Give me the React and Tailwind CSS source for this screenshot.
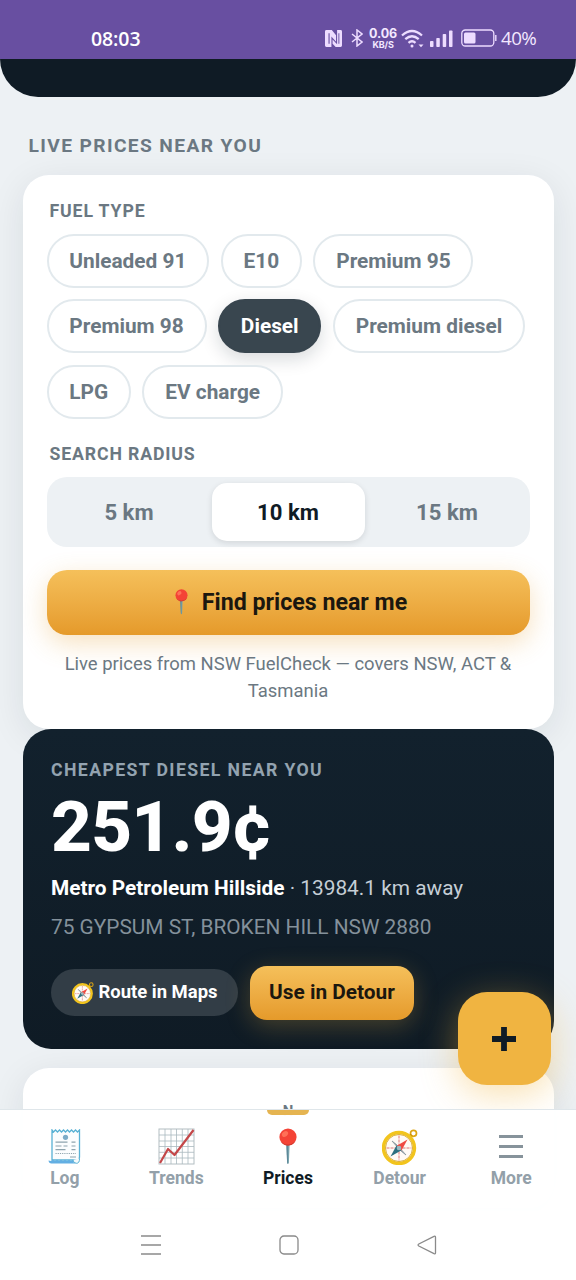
import { useState } from "react";

const fuelTypes = ["Unleaded 91", "E10", "Premium 95", "Premium 98", "Diesel", "Premium diesel", "LPG", "EV charge"];
const radiusOptions = ["5 km", "10 km", "15 km"];

function PinIcon({ className }) {
  return (
    <svg viewBox="0 0 18 37" className={className}>
      <path d="M7.4 16h3.2l-.7 18.5q-.9 3-1.8 0z" fill="#78a3ad" />
      <path d="M7.4 16h1.3v20q-.4 0-.6-1.500z" fill="#527f91" />
      <circle cx="9" cy="9" r="8.6" fill="#f44336" />
      <path d="M1.500 13a8.600 8.600 0 0 0 15.400-.700A9.500 9.500 0 0 1 1.500 13" fill="#c6372d" />
      <ellipse cx="6" cy="6" rx="3.400" ry="2.500" fill="#ff7057" transform="rotate(-40 6 6)" />
    </svg>
  );
}

function CompassIcon({ className }) {
  return (
    <svg viewBox="0 0 36 36" className={className}>
      <circle cx="31.500" cy="4.300" r="3" fill="none" stroke="#dda512" strokeWidth="1.700" />
      <path d="m26 9 3.500-3" stroke="#c78c0b" strokeWidth="3" />
      <circle cx="17" cy="19" r="15.500" fill="#fffaf5" stroke="#f2c41d" strokeWidth="3.400" />
      <circle cx="17" cy="19" r="13.500" fill="none" stroke="#d19d14" strokeWidth=".8" />
      <path d="M17 6.500v25M4.500 19h25" stroke="#de7777" strokeWidth="1" strokeDasharray="3 1" />
      <path d="m10 12 5.500 4.500L24 26l-5.500-4.500z" fill="#8f9ca3" stroke="#8f9ca3" />
      <path d="m25.500 10.500-10.700 6.300 4.700 4.600z" fill="#ef4a42" />
      <path d="m8.500 27.500 6-10.900 4.700 4.800z" fill="#2d7080" />
      <circle cx="17" cy="19" r="2.300" fill="#9bb8bf" />
    </svg>
  );
}

function ReceiptIcon() {
  return (
    <svg viewBox="0 0 33 35" className="h-[35px] w-[33px]">
      <path d="M4 1v30h25q2.500 0 2.500-3V1l-2 2-2-2-2 2-2-2-2 2-2-2-2 2-2-2-2 2-2-2-2 2-2-2-2 2z" fill="#fbfdfe" stroke="#58b1d4" strokeWidth="1.300" />
      <path d="M.5 31.500 3 32l2-1.300L7 32l2-1.300L11 32l2-1.300L15 32l2-1.300L19 32l2-1.300L23 32l2-1.300q0 3.500 3.500 3.800H3.500Q.8 34.500.5 31.500" fill="#63afe3" />
      <path d="M25 31q.3 3.300 3.500 3.300t3-5" fill="#f5fafc" stroke="#58b1d4" strokeWidth="1" />
      <circle cx="17.500" cy="8.300" r="2.600" fill="#7cacc8" />
      <path d="M7.500 13.200h12m4 0h4M7.500 17h6m2 0h4m4 0h4M7.500 20.700h10m6 0h4M22 28h6" stroke="#8ea4ae" strokeWidth="1.200" />
      <path d="M7.500 24.500h20.500" stroke="#8ea4ae" strokeWidth="1.200" strokeDasharray="1.200 1" />
    </svg>
  );
}

function ChartIcon() {
  return (
    <svg viewBox="0 0 37 37" className="h-[37px] w-[37px]">
      <rect x="1" y="1" width="35" height="35" fill="#fff" stroke="#b3bec2" />
      <path d="M7 1v35M13 1v35M18.500 1v35M24.300 1v35M30 1v35M1 7h35M1 13h35M1 18.500h35M1 24.300h35M1 30h35" stroke="#a9b9bf" strokeWidth=".8" />
      <path d="m2 35 8-14 6.500 6L35.500 2" fill="none" stroke="#c44749" strokeWidth="2.200" strokeLinejoin="round" />
    </svg>
  );
}

function MenuIcon() {
  return (
    <svg viewBox="0 0 24 24" className="size-6">
      <path d="M0 1.500h24M0 11.500h24M0 21.500h24" stroke="#87939b" strokeWidth="2.800" />
    </svg>
  );
}

function StatusBar() {
  return (
    <header className="flex h-[59px] shrink-0 items-end bg-[#684fa1] pr-[40px] pb-[8px] pl-[91px] font-['Open_Sans',sans-serif] text-[#f3e8ff]">
      <span className="mr-auto pb-px text-[19.500px] font-semibold leading-[23px] tracking-[-0.1px] text-white">08:03</span>
      <svg viewBox="0 0 18 18" className="mr-px mb-[4px] h-[17px] w-[17px]" fill="#eddcff">
        <path d="M1.500 0h5.700l4.500 5.500v7L6.800 7v11H1.500Q0 18 0 16.500v-15Q0 0 1.500 0m2.200 3.500v11h1.200v-11z" fillRule="evenodd" />
        <path d="M16.500 18h-5.200L8 14.500V10l4.800 5V0h3.700Q18 0 18 1.500v15q0 1.500-1.500 1.500m-2.300-3.500v-11h1v11z" fillRule="evenodd" />
      </svg>
      <svg viewBox="0 0 12 18" className="mr-px mb-[4px] ml-[8px] h-[18px] w-3" fill="none" stroke="#eddcff" strokeWidth="1.500">
        <path d="m1 5 10 8-5 4V1l5 4-10 8" />
      </svg>
      <div className="mb-[2px] ml-[5px] flex w-[28px] flex-col items-center font-['Inter',sans-serif] font-bold whitespace-nowrap">
        <span className="text-[12.500px] leading-[12px] tracking-[-0.1px]">0.06</span>
        <span className="text-[9px] leading-[9px] tracking-[-0.2px]">KB/S</span>
      </div>
      <svg viewBox="0 0 24 19" className="mb-[3px] ml-[4px] h-[19px] w-6" fill="none" stroke="#eddcff" strokeWidth="2.300">
        <path d="M1 6.500q10-9 20 0M4.300 10.200q6.700-6 13.400 0M7.500 13.800q3.500-3 7 0" />
        <circle cx="11" cy="17" r="1.500" fill="#eddcff" stroke="none" />
        <path d="M17.500 15.500h5L20 18.200z" fill="#eddcff" stroke="none" />
      </svg>
      <svg viewBox="0 0 23 17" className="mb-[4px] ml-[5px] h-[17px] w-[23px]" fill="#eddcff">
        <rect y="11" width="3.500" height="6" rx=".8" />
        <rect x="6.300" y="8" width="3.500" height="9" rx=".8" />
        <rect x="12.700" y="4" width="3.500" height="13" rx=".8" />
        <rect x="19" y=".5" width="3.500" height="16.500" rx=".8" />
      </svg>
      <svg viewBox="0 0 36 18" className="mb-[4px] ml-2 h-[18px] w-9">
        <rect x=".8" y="1" width="32" height="16" rx="3.500" fill="none" stroke="#eddcff" strokeWidth="1.300" />
        <rect x="3" y="3.500" width="11.500" height="11" rx="1.500" fill="#eddcff" />
        <path d="M34.800 6v6" stroke="#eddcff" strokeWidth="1.400" />
      </svg>
      <span className="ml-1 pb-px text-[18.800px] font-medium leading-[23px] tracking-[-0.7px]">40%</span>
    </header>
  );
}

const navItems = [
  { label: "Log", icon: <ReceiptIcon /> },
  { label: "Trends", icon: <ChartIcon /> },
  { label: "Prices", icon: <PinIcon className="h-[37px] w-[18px]" /> },
  { label: "Detour", icon: <CompassIcon className="size-[36px]" /> },
  { label: "More", icon: <MenuIcon /> },
];

export default function App() {
  const [fuel, setFuel] = useState("Diesel");
  const [radius, setRadius] = useState("10 km");

  return (
    <div className="relative flex h-[1280px] w-[576px] flex-col overflow-hidden bg-[#edf1f4] font-['Roboto',sans-serif] text-[#6b7882]">
      <StatusBar />
      <div className="h-[38px] shrink-0 rounded-b-[40px] bg-[#0f1b25]" />

      <main className="flex min-h-0 flex-1 flex-col px-[22.5px]">
        <h2 className="mt-[37px] mb-[16.8px] pl-[6px] text-[19.2px] leading-6 font-bold tracking-[1.38px]">LIVE PRICES NEAR YOU</h2>

        {/* Search card */}
        <section className="h-[553.8px] shrink-0 rounded-[26px] bg-white px-6 pt-[25px] shadow-[0_8px_36px_rgba(15,35,48,0.09)]">
          <h3 className="pl-[3px] text-[17.700px] leading-[22px] font-bold tracking-[0.86px]">FUEL TYPE</h3>
          <div className="mt-3 flex flex-wrap gap-[11.5px]">
            {fuelTypes.map((type) => (
              <button
                key={type}
                onClick={() => setFuel(type)}
                className={`h-[54px] rounded-full border-2 px-[20.8px] pt-[1.5px] text-[20.830px] font-bold ${
                  fuel === type
                    ? "border-[#39464f] bg-[#39464f] text-white shadow-[0_6px_18px_rgba(15,27,37,0.16)]"
                    : "border-[#e2e9ed] bg-white"
                }`}
              >
                {type}
              </button>
            ))}
          </div>

          <h3 className="mt-6 pl-[3px] text-[17.700px] leading-[22px] font-bold tracking-[0.86px]">SEARCH RADIUS</h3>
          <div className="mt-[12.5px] flex h-[69.5px] gap-[6px] rounded-[20px] bg-[#edf1f4] p-[6px]">
            {radiusOptions.map((option) => (
              <button
                key={option}
                onClick={() => setRadius(option)}
                className={`flex-1 rounded-[15px] pt-px text-[22.100px] font-bold ${
                  radius === option ? "bg-white text-[#0f1b25] shadow-[0_2px_6px_rgba(15,27,37,0.12)]" : ""
                }`}
              >
                {option}
              </button>
            ))}
          </div>

          <button className="mt-[23px] flex h-[65px] w-full items-center justify-center rounded-[20px] bg-linear-to-b from-[#f5c05a] to-[#e59a2a] pt-px pl-[6px] text-[23.200px] font-bold text-[#1b170f] shadow-[0_8px_26px_rgba(229,154,42,0.30)]">
            <PinIcon className="mr-[14px] mb-px h-[26px] w-[13px]" />
            Find prices near me
          </button>
          <p className="mt-4 text-center text-[18.450px] leading-[26.900px]">
            Live prices from NSW FuelCheck — covers NSW, ACT &amp; Tasmania
          </p>
        </section>

        {/* Cheapest result */}
        <section className="h-[320px] shrink-0 rounded-[28px] bg-linear-to-b from-[#12212d] to-[#0f1b25] px-[28.5px] pt-[30px]">
          <h3 className="text-[17.700px] leading-[22px] font-bold tracking-[1.38px] text-[#93a3b0]">CHEAPEST DIESEL NEAR YOU</h3>
          <div className="mt-[9px] text-[71px] leading-[74px] font-extrabold tracking-[-0.8px] text-white">251.9¢</div>
          <p className="mt-[9px] text-[20.830px] leading-[30px] text-[#c5ced6]">
            <b className="font-bold text-white">Metro Petroleum Hillside</b> · 13984.1 km away
          </p>
          <p className="mt-[9px] text-[20.830px] leading-[30px] text-[#84919b]">75 GYPSUM ST, BROKEN HILL NSW 2880</p>
          <div className="mt-6 flex items-center gap-3">
            <button className="flex h-[47px] w-[187px] items-center justify-center rounded-full bg-[#323d46] text-[18.450px] font-bold text-white">
              <CompassIcon className="mr-[5px] size-[22px]" />
              Route in Maps
            </button>
            <button className="h-[54px] w-[164px] rounded-[17px] bg-linear-to-b from-[#f5c05a] to-[#e59a2a] pt-px text-[20.830px] font-bold text-[#1b170f] shadow-[0_6px_24px_rgba(240,180,62,0.25)]">
              Use in Detour
            </button>
          </div>
        </section>

        {/* Map card, cut off by the tab bar */}
        <section className="mt-[19.5px] h-[140px] shrink-0 rounded-[26px] bg-white pt-[34px] text-center text-[15px] leading-[18px] font-bold shadow-[0_8px_36px_rgba(15,35,48,0.09)]">
          N
        </section>
      </main>

      <button className="absolute top-[992px] left-[457.500px] flex size-[93px] items-center justify-center rounded-[29px] bg-[#f0b441] shadow-[0_9px_36px_rgba(240,180,65,0.42)]">
        <svg viewBox="0 0 24 24" className="size-6">
          <path d="M12 0v24M0 12h24" stroke="#0f1b25" strokeWidth="5.800" />
        </svg>
      </button>

      {/* Tab bar */}
      <nav className="z-10 flex h-[102px] shrink-0 border-t border-[#dfe6ea] bg-white/97 px-[9px]">
        {navItems.map((item) => {
          const active = item.label === "Prices";
          return (
            <div key={item.label} className="relative flex flex-1 flex-col items-center pt-[18px]">
              {active && <span className="absolute top-0 h-[5px] w-[42px] rounded-b-[5px] bg-[#e5b451]" />}
              <div className="flex h-[37px] items-center">{item.icon}</div>
              <span className={`mt-[2px] text-[17.500px] leading-[22px] font-bold ${active ? "text-[#0f1b25]" : "text-[#93a0a9]"}`}>
                {item.label}
              </span>
            </div>
          );
        })}
      </nav>

      {/* System navigation */}
      <footer className="z-10 flex h-[69px] shrink-0 items-center justify-center gap-[118px] bg-white pb-[2px] pl-[2px]">
        <svg viewBox="0 0 20 20" className="size-5" stroke="#8a8a8a" strokeWidth="1.600">
          <path d="M0 1h20M0 10h20M0 19h20" />
        </svg>
        <svg viewBox="0 0 20 20" className="size-5" fill="none" stroke="#8a8a8a" strokeWidth="1.300">
          <rect x="1" y="1" width="18" height="18" rx="4" />
        </svg>
        <svg viewBox="0 0 20 20" className="size-5" fill="none" stroke="#8a8a8a" strokeWidth="1.300">
          <path d="M17 1.300 1.800 9q-1.500 1 0 2L17 18.700q1.500.5 1.500-1V2.300q0-1.500-1.500-1" />
        </svg>
      </footer>
    </div>
  );
}
